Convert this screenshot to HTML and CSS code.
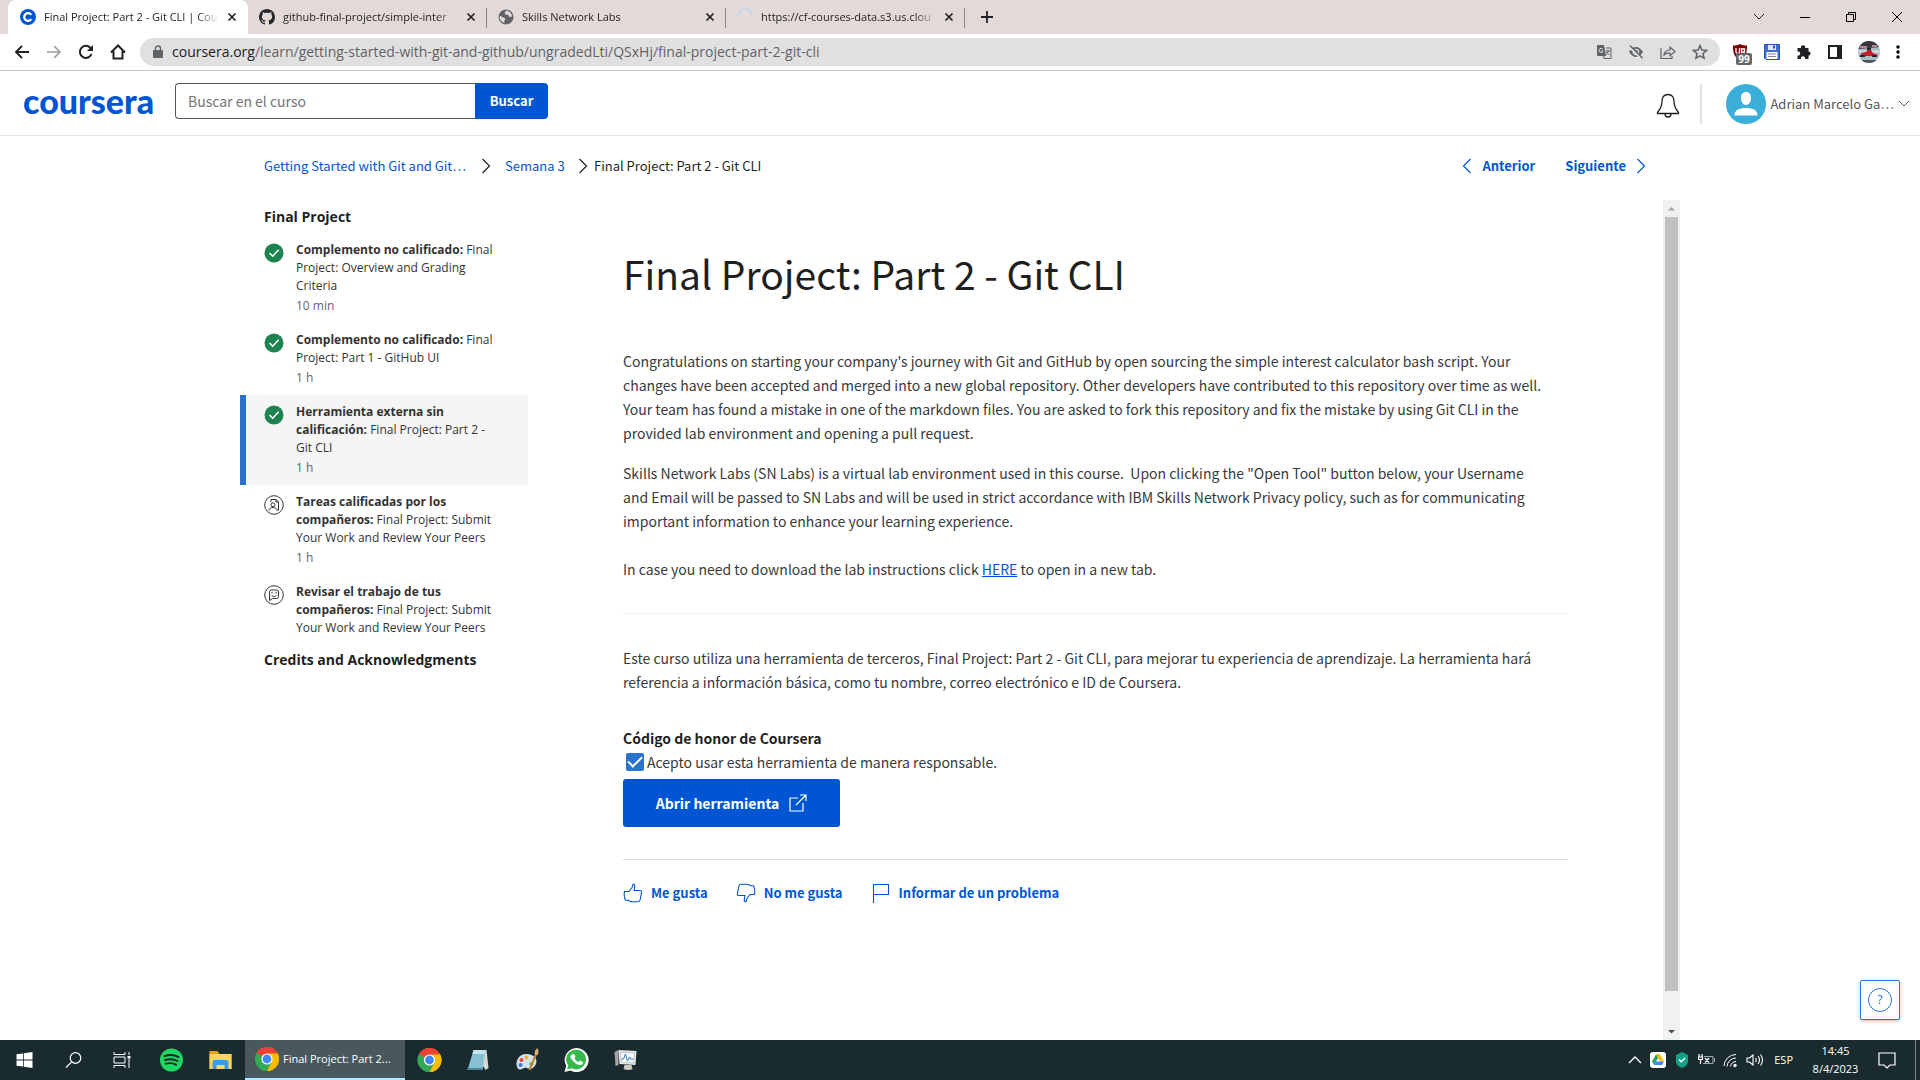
FILE: index.html
```html
<!DOCTYPE html>
<html lang="es">
<head>
<meta charset="utf-8">
<title>Final Project: Part 2 - Git CLI | Coursera</title>
<link rel="stylesheet" href="styles.css">
</head>
<body>
<svg class="defs" width="0" height="0" aria-hidden="true">
  <defs>
    <symbol id="close" viewBox="0 0 10 10"><path d="M1.5 1.5l7 7M8.5 1.5l-7 7" fill="none" stroke="#202124" stroke-width="1.7"/></symbol>
    <symbol id="right" viewBox="0 0 10 16"><path d="M1.500 1l7 7-7 7" fill="none" stroke="currentColor" stroke-width="1.200"/></symbol>
    <symbol id="left" viewBox="0 0 10 16"><path d="M8.500 1l-7 7 7 7" fill="none" stroke="currentColor" stroke-width="1.200"/></symbol>
    <symbol id="done" viewBox="0 0 20 20"><circle cx="10" cy="10" r="9.500" fill="#1d8450"/><path d="M5.500 10l3.200 3.200 6-6.400" fill="none" stroke="#fff" stroke-width="1.500"/></symbol>
    <symbol id="chrome" viewBox="0 0 24 24"><path d="M12 12L1.610 6A12 12 0 0 1 22.390 6z" fill="#ea4335"/><path d="M12 12L22.390 6A12 12 0 0 1 12 24z" fill="#fbbc04"/><path d="M12 12V24A12 12 0 0 1 1.610 6z" fill="#34a853"/><path d="M12 6.500h10.700A12 12 0 0 0 1.610 6l5.600 8.700z" fill="#ea4335"/><path d="M17 9.500L12 24a12 12 0 0 0 10.700-17.500H12z" fill="#fbbc04"/><path d="M7.200 9.300L1.610 6A12 12 0 0 0 12 24l4.800-9.300z" fill="#34a853"/><circle cx="12" cy="12" r="5.600" fill="#fff"/><circle cx="12" cy="12" r="4.400" fill="#4285f4"/></symbol>
  </defs>
</svg>

<header class="browser">
  <div class="tabs">
    <div class="tab active">
      <svg width="16" height="16" viewBox="0 0 16 16"><circle cx="8" cy="8" r="8" fill="#0056d2"/><path d="M11.200 5.900a3.800 3.800 0 1 0 0 4.200" fill="none" stroke="#fff" stroke-width="2.300"/></svg>
      <span class="tab-title">Final Project: Part 2 - Git CLI | Cou</span>
      <button class="icon-btn" aria-label="Cerrar"><svg width="10" height="10"><use href="#close"/></svg></button>
    </div>
    <div class="tab">
      <svg width="16" height="16" viewBox="0 0 16 16"><path fill="#24292f" d="M8 0C3.580 0 0 3.580 0 8c0 3.540 2.290 6.530 5.470 7.590.4.070.55-.17.55-.38 0-.19-.010-.82-.010-1.490-2.010.37-2.530-.49-2.690-.94-.090-.23-.48-.94-.82-1.130-.28-.15-.68-.52-.010-.53.63-.010 1.080.58 1.230.82.72 1.210 1.870.87 2.330.66.070-.52.28-.87.51-1.070-1.780-.2-3.640-.89-3.640-3.950 0-.87.31-1.590.82-2.150-.080-.2-.36-1.020.080-2.120 0 0 .67-.21 2.200.82.640-.18 1.320-.27 2-.27s1.360.090 2 .27c1.530-1.040 2.200-.82 2.200-.82.44 1.100.16 1.920.080 2.120.51.56.82 1.270.82 2.150 0 3.070-1.870 3.750-3.650 3.950.29.25.54.73.54 1.480 0 1.070-.010 1.930-.010 2.200 0 .21.15.46.55.38A8 8 0 0 0 16 8c0-4.420-3.580-8-8-8z"/></svg>
      <span class="tab-title">github-final-project/simple-inter</span>
      <button class="icon-btn" aria-label="Cerrar"><svg width="10" height="10"><use href="#close"/></svg></button>
    </div>
    <div class="tab">
      <svg width="16" height="16" viewBox="0 0 16 16"><circle cx="8" cy="8" r="7.500" fill="#5f6368"/><path d="M2 6.500l2.500 1.800 2 .4.800 1.800-1.200 1.800.4 2L3 12 1.500 9zM8.500 1.500L6.500 4l1 1.500 2.500.300 1.500 2.200 2.500-.5-.5-2.500-2.500-2.500z" fill="#e3dad7"/></svg>
      <span class="tab-title">Skills Network Labs</span>
      <button class="icon-btn" aria-label="Cerrar"><svg width="10" height="10"><use href="#close"/></svg></button>
    </div>
    <div class="tab">
      <svg width="16" height="16" viewBox="0 0 16 16"><path d="M1 6.500A7 7 0 0 1 15 8" fill="none" stroke="#bcd3f7" stroke-width="1.600"/></svg>
      <span class="tab-title">https://cf-courses-data.s3.us.clou</span>
      <button class="icon-btn" aria-label="Cerrar"><svg width="10" height="10"><use href="#close"/></svg></button>
    </div>
    <button class="icon-btn new-tab" aria-label="Nueva pestaña"><svg width="14" height="14" viewBox="0 0 14 14"><path d="M7 1v12M1 7h12" stroke="#202124" stroke-width="1.800"/></svg></button>
    <div class="window-controls">
      <button class="icon-btn" aria-label="Pestañas"><svg width="12" height="8" viewBox="0 0 12 8"><path d="M1 1l5 5 5-5" fill="none" stroke="#222"/></svg></button>
      <button class="icon-btn" aria-label="Minimizar"><svg width="10" height="10" viewBox="0 0 10 10"><path d="M0 5.500h10" stroke="#000"/></svg></button>
      <button class="icon-btn" aria-label="Restaurar"><svg width="10" height="10" viewBox="0 0 10 10"><path d="M.5 2.500h7v7h-7zM2.500 2.500v-2h7v7h-2" fill="none" stroke="#000"/></svg></button>
      <button class="icon-btn" aria-label="Cerrar ventana"><svg width="10" height="10" viewBox="0 0 10 10"><path d="M0 0l10 10M10 0L0 10" stroke="#000"/></svg></button>
    </div>
  </div>
  <div class="toolbar">
    <div class="nav">
      <button class="icon-btn" aria-label="Atrás"><svg width="16" height="16" viewBox="0 0 16 16"><path d="M15 8H2M8 2L2 8l6 6" fill="none" stroke="#202124" stroke-width="1.900"/></svg></button>
      <button class="icon-btn" aria-label="Adelante"><svg width="16" height="16" viewBox="0 0 16 16"><path d="M1 8h13M8 2l6 6-6 6" fill="none" stroke="#9a9da0" stroke-width="1.600"/></svg></button>
      <button class="icon-btn" aria-label="Recargar"><svg width="16" height="16" viewBox="0 0 16 16"><path d="M13.500 10A6 6 0 1 1 12.300 3.800L14 5.500" fill="none" stroke="#202124" stroke-width="2"/><path d="M15 1v6H9z" fill="#202124"/></svg></button>
      <button class="icon-btn" aria-label="Inicio"><svg width="16" height="16" viewBox="0 0 16 16"><path d="M1 8.500L8 1.500l7 7M3.500 7v7.500h9V7" fill="none" stroke="#202124" stroke-width="2"/></svg></button>
    </div>
    <div class="address">
      <svg width="10" height="14" viewBox="0 0 10 14"><rect y="5" width="10" height="8" rx="1" fill="#5f6368"/><path d="M2.500 6V3.500a2.500 2.500 0 0 1 5 0V6" fill="none" stroke="#5f6368" stroke-width="1.400"/></svg>
      <span class="url"><b>coursera.org</b>/learn/getting-started-with-git-and-github/ungradedLti/QSxHj/final-project-part-2-git-cli</span>
      <svg width="16" height="16" viewBox="0 0 16 16"><path d="M1 1h7l2 11H2a1 1 0 0 1-1-1z" fill="#5f6368"/><path d="M10 4h5v10.500H8L7.500 12" fill="none" stroke="#5f6368"/><path d="M6.500 5A2 2 0 1 0 7 7H5.200" fill="none" stroke="#e0e0e0"/><path d="M9.500 7h5M12 6v1c0 2-1 3-2 4M10.500 8c1 2 2 2 3 3" fill="none" stroke="#5f6368"/></svg>
      <svg width="16" height="16" viewBox="0 0 16 16"><path d="M1 8q7-10 14 0-7 10-14 0z" fill="#5f6368"/><circle cx="8" cy="8" r="2.600" fill="#5f6368" stroke="#e0e0e0" stroke-width="1.400"/><path d="M1.500 2.500l12 12" stroke="#e0e0e0" stroke-width="3"/><path d="M2 1.500l12.500 12.500" stroke="#5f6368" stroke-width="1.500"/></svg>
      <svg width="16" height="16" viewBox="0 0 16 16"><path d="M1 4v10.500h11V12M4 11c.5-4 3-5 6-5V3l5 4.500-5 4.300V9c-3-.2-4.500.5-6 2z" fill="none" stroke="#5f6368" stroke-width="1.200"/></svg>
      <svg width="16" height="16" viewBox="0 0 16 16"><path d="M8 1.600l1.900 4.500 4.700.4-3.600 3.100 1.100 4.700L8 11.800l-4.100 2.500L5 9.600 1.400 6.500l4.700-.4z" fill="none" stroke="#5f6368" stroke-width="1.500"/></svg>
    </div>
    <div class="extensions">
      <div class="blocker"><svg width="16" height="16" viewBox="0 0 16 16"><path d="M8 0c2 1.200 4.500 1.500 7 1.500 0 7-.5 11-7 14.500C1.500 12.500 1 8.500 1 1.500 3.500 1.500 6 1.200 8 0z" fill="#800000"/><path d="M4 4v4c0 2 3.500 2 3.500 0V4M9.500 9V4M9.500 5h3v3h-3" fill="none" stroke="#fff" stroke-width="1.300"/></svg><span class="badge">99</span></div>
      <svg width="16" height="16" viewBox="0 0 16 16"><path d="M.5.5h15v15H2L.5 14z" fill="#3b6fd1" stroke="#2a56b0"/><path d="M4 1h8v5H4z" fill="#dce9fb"/><path d="M9 1.500h2v3H9z" fill="#2a56b0"/><path d="M2.500 8h11v7h-11z" fill="#fff"/><path d="M4 10h8M4 12.500h8" stroke="#888"/></svg>
      <svg width="16" height="16" viewBox="0 0 16 16"><path d="M1.500 4H5a2.200 2.200 0 1 1 4.200 0h3.300v3.500a2.100 2.100 0 1 1 0 4.200V15H9a2.100 2.100 0 1 0-4 0H1.500v-3.500a2.100 2.100 0 1 0 0-4z" fill="#202124"/></svg>
      <svg width="14" height="14" viewBox="0 0 14 14"><path d="M1 1h12v12H1z" fill="none" stroke="#202124" stroke-width="2"/><path d="M9 1h4v12H9z" fill="#202124"/></svg>
      <svg width="22" height="22" viewBox="0 0 22 22"><clipPath id="face"><circle cx="11" cy="11" r="11"/></clipPath><g clip-path="url(#face)"><path fill="#a9bac3" d="M0 0h22v22H0z"/><path fill="#39363d" d="M0 0h22v6L0 8z"/><path fill="#b88594" d="M2 5h7v2H2zM14 4h5v2h-5z"/><path fill="#c7d4da" d="M0 9h22v3H0z"/><path fill="#c51e2b" d="M3 12l5-1 2-3 3 1 2 3 5 2-3 1H4z"/><path fill="#25242a" d="M2 14h5v2H2zM14 14h5v2h-5zM9 7h4v2H9z"/><path fill="#4a5862" d="M0 19h22v4H0z"/></g></svg>
      <svg width="4" height="16" viewBox="0 0 4 16"><circle cx="2" cy="3" r="1.700"/><circle cx="2" cy="8" r="1.700"/><circle cx="2" cy="13" r="1.700"/></svg>
    </div>
  </div>
</header>

<header class="site-header">
  <a class="logo" href="#">coursera</a>
  <form class="search">
    <input type="text" placeholder="Buscar en el curso" aria-label="Buscar en el curso">
    <button type="button">Buscar</button>
  </form>
  <div class="account">
    <button class="icon-btn bell" aria-label="Notificaciones"><svg width="24" height="26" viewBox="0 0 24 26"><path d="M12 1.500c-4 0-6 3-6 7 0 5-2 8-4.500 11v1h21v-1C20 16.500 18 13.500 18 8.500c0-4-2-7-6-7zM9 21c0 4 6 4 6 0" fill="none" stroke="#1f1f1f" stroke-width="1.300"/></svg></button>
    <button class="user">
      <svg width="40" height="40" viewBox="0 0 40 40"><circle cx="20" cy="20" r="20" fill="#3bafda"/><path d="M20 8c3.500 0 5 2.500 5 6s-2 7-5 7-5-3.500-5-7 1.500-6 5-6zM8.500 31.500C8.500 26 13 24 20 24s11.500 2 11.500 7.500z" fill="#fff"/></svg>
      <span>Adrian Marcelo Ga…</span>
      <svg class="caret" width="12" height="8" viewBox="0 0 12 8"><path d="M1 1l5 5 5-5" fill="none" stroke="#555"/></svg>
    </button>
  </div>
</header>

<div class="page">
  <div class="crumb-bar">
    <nav class="crumbs" aria-label="Ruta">
      <a class="course" href="#">Getting Started with Git and Git…</a>
      <svg class="sep" width="10" height="16"><use href="#right"/></svg>
      <a class="week" href="#">Semana 3</a>
      <svg class="sep" width="10" height="16"><use href="#right"/></svg>
      <span>Final Project: Part 2 - Git CLI</span>
    </nav>
    <nav class="pager" aria-label="Elementos">
      <a href="#"><svg width="10" height="16"><use href="#left"/></svg>Anterior</a>
      <a href="#">Siguiente<svg width="10" height="16"><use href="#right"/></svg></a>
    </nav>
  </div>
  <div class="columns">
    <aside class="sidebar">
      <h2>Final Project</h2>
      <ul>
        <li><svg width="20" height="20"><use href="#done"/></svg><div><a href="#"><b>Complemento no calificado:</b> Final Project: Overview and Grading Criteria</a><small>10 min</small></div></li>
        <li><svg width="20" height="20"><use href="#done"/></svg><div><a href="#"><b>Complemento no calificado:</b> Final Project: Part 1 - GitHub UI</a><small>1 h</small></div></li>
        <li class="current"><svg width="20" height="20"><use href="#done"/></svg><div><a href="#"><b>Herramienta externa sin calificación:</b> Final Project: Part 2 - Git CLI</a><small>1 h</small></div></li>
        <li><svg width="20" height="20" viewBox="0 0 20 20"><g fill="none" stroke="#333"><circle cx="10" cy="10" r="9.300"/><path d="M7 7V4.500h5l2.500 2.500v8H13M12 4.500V7h2.500M5 15.500c0-4 8-4 8 0"/><circle cx="9" cy="9.800" r="2"/></g></svg><div><a href="#"><b>Tareas calificadas por los compañeros:</b> Final Project: Submit Your Work and Review Your Peers</a><small>1 h</small></div></li>
        <li><svg width="20" height="20" viewBox="0 0 20 20"><g fill="none" stroke="#333"><circle cx="10" cy="10" r="9.300"/><path d="M5.500 15.500V7q0-2 2-2h5q2 0 2 2v4.500q0 2-2 2h-4zM7.500 10c1 2 4 2 5 0M8 7v1.500M12 7v1.500"/></g></svg><div><a href="#"><b>Revisar el trabajo de tus compañeros:</b> Final Project: Submit Your Work and Review Your Peers</a></div></li>
      </ul>
      <h2>Credits and Acknowledgments</h2>
    </aside>
    <main class="content">
      <h1>Final Project: Part 2 - Git CLI</h1>
      <p>Congratulations on starting your company's journey with Git and GitHub by open sourcing the simple interest calculator bash script. Your<br>changes have been accepted and merged into a new global repository. Other developers have contributed to this repository over time as well.<br>Your team has found a mistake in one of the markdown files. You are asked to fork this repository and fix the mistake by using Git CLI in the<br>provided lab environment and opening a pull request.</p>
      <p>Skills Network Labs (SN Labs) is a virtual lab environment used in this course.&nbsp; Upon clicking the "Open Tool" button below, your Username<br>and Email will be passed to SN Labs and will be used in strict accordance with IBM Skills Network Privacy policy, such as for communicating<br>important information to enhance your learning experience.</p>
      <p class="download">In case you need to download the lab instructions click <a href="#">HERE</a> to open in a new tab.</p>
      <hr class="light">
      <p class="notice">Este curso utiliza una herramienta de terceros, Final Project: Part 2 - Git CLI, para mejorar tu experiencia de aprendizaje. La herramienta hará<br>referencia a información básica, como tu nombre, correo electrónico e ID de Coursera.</p>
      <h3>Código de honor de Coursera</h3>
      <label class="agree"><input type="checkbox" checked>Acepto usar esta herramienta de manera responsable.</label>
      <button class="open-tool">Abrir herramienta<svg width="18" height="18" viewBox="0 0 18 18"><path d="M9 4H1v13h13V9M7 11L17 1M11 1h6v6" fill="none" stroke="#fff" stroke-width="1.200"/></svg></button>
      <hr>
      <div class="feedback">
        <button><svg width="20" height="20" viewBox="0 0 20 20"><path d="M1.500 8.500H6L9 4.500c.6-1 .4-3 1.200-3.300 1.500-.3 1.800 1.800 1.300 3.800L11 7.500h6.500c1.500 0 1.200 2 .9 3l-1.300 6.500c-.3 1.300-1 1.800-2.200 1.800H9c-2 0-2.500-1-4-1.500H2.500c-1.200-2.500-1.600-5.800-1-8.800z" fill="none" stroke="currentColor" stroke-width="1.100"/></svg>Me gusta</button>
        <button><svg width="20" height="20" viewBox="0 0 20 20"><path d="M18.500 11.500H14L11 15.500c-.6 1-.4 3-1.200 3.300-1.500.3-1.800-1.800-1.300-3.800l.5-2.500H2.500c-1.500 0-1.200-2-.9-3L2.900 3c.3-1.300 1-1.800 2.200-1.800H11c2 0 2.500 1 4 1.500h2.500c1.200 2.500 1.600 5.800 1 8.800z" fill="none" stroke="currentColor" stroke-width="1.100"/></svg>No me gusta</button>
        <button><svg width="20" height="20" viewBox="0 0 20 20"><path d="M2.500 20V1.500h15v10h-15" fill="none" stroke="currentColor" stroke-width="1.100"/></svg>Informar de un problema</button>
      </div>
    </main>
    <div class="scrollbar" aria-hidden="true">
      <svg width="17" height="17" viewBox="0 0 17 17"><path d="M5 10.500h7L8.500 7z" fill="#a3a3a3"/></svg>
      <div class="track"><div class="thumb"></div></div>
      <svg width="17" height="17" viewBox="0 0 17 17"><path d="M5 7h7l-3.500 3.500z" fill="#505050"/></svg>
    </div>
  </div>
</div>

<button class="help" aria-label="Ayuda"><span>?</span></button>

<footer class="taskbar">
  <div class="apps">
    <svg width="16" height="16" viewBox="0 0 16 16"><path d="M0 2.300l6.500-.9v6.200H0zM7.300 1.300L16 0v7.600H7.300zM0 8.400h6.500v6.200L0 13.700zM7.300 8.400H16V16l-8.700-1.200z" fill="#fff"/></svg>
    <svg width="16" height="16" viewBox="0 0 16 16"><circle cx="10" cy="6" r="5.300" fill="none" stroke="#fff" stroke-width="1.200"/><path d="M6.200 9.800L.5 15.500" stroke="#fff" stroke-width="1.200"/></svg>
    <svg width="18" height="16" viewBox="0 0 18 16"><path d="M.5 0v2.500h11V0M.5 16v-2.500h11V16M.5 5h11v6H.5zM15.500 0v3M15.500 7v9" fill="none" stroke="#fff"/><path d="M14 4h3v2.500h-3z" fill="#fff"/></svg>
    <svg width="24" height="24" viewBox="0 0 24 24"><circle cx="12" cy="12" r="11.500" fill="#1ed760"/><path d="M5 8q8-2.500 14 1M5.500 12q7-2 12.500 1M6 15.700q6-1.500 10.500 1" fill="none" stroke="#14252a" stroke-width="1.900" stroke-linecap="round"/></svg>
    <svg width="24" height="24" viewBox="0 0 24 24"><path d="M1 3h8l2 3h12v15H1z" fill="#e6a117"/><path d="M1 6h22v15H1z" fill="#ffd35c"/><path d="M4 21v-7q0-2 2-2h12q2 0 2 2v7h-4v-4H8v4z" fill="#3c9be8"/></svg>
  </div>
  <button class="running"><svg width="24" height="24"><use href="#chrome"/></svg>Final Project: Part 2...</button>
  <div class="apps pinned">
    <svg width="24" height="24"><use href="#chrome"/></svg>
    <svg width="24" height="24" viewBox="0 0 24 24"><path d="M7 2h13l2 18-3 2z" fill="#d8d9d2"/><path d="M7 2h12l-3 20H1z" fill="#86c1d3"/><path d="M7 2h12l-1 4H6z" fill="#c5e5ec"/><path d="M1 20h15v2H1z" fill="#4c8398"/></svg>
    <svg width="24" height="24" viewBox="0 0 24 24"><path d="M11 6C3 6-1 14 2 20c3 4 6-1 9 0s6 2 9-3-1-11-9-11z" fill="#d2e2ee"/><circle cx="6" cy="12" r="2" fill="#e5493a"/><circle cx="11" cy="9.500" r="1.900" fill="#f2b632"/><circle cx="5" cy="17" r="2" fill="#3b7dd0"/><circle cx="16" cy="16" r="2" fill="#4cae4f"/><path d="M21 5L14 22" stroke="#c8822e" stroke-width="2"/><path d="M19 6q0-4 3-6 2 4 0 7z" fill="#e0b16b"/></svg>
    <svg width="24" height="24" viewBox="0 0 24 24"><path d="M0 24l1.700-6A12 12 0 1 1 6 22.400z" fill="#fff"/><path d="M2.500 21.500l1.200-4A9.900 9.900 0 1 1 7 20.300z" fill="#34b94b"/><path d="M8 6l1.800.2L11 9l-1 1.500q1.200 2.500 4 3.500l1.500-1.500 3 1.400q.2 2.600-2.500 3.100-3.500.5-7.500-4T6.500 7.500z" fill="#fff"/></svg>
    <svg width="24" height="24" viewBox="0 0 24 24"><path d="M1 4l4-2v15l-3 1z" fill="#a5a5a3"/><path d="M5 2l18 1-1 14-16-1z" fill="#e6e6e3"/><path d="M7 4l14 1-1 10-12-1z" fill="#f7faff" stroke="#a8b2b8" stroke-width=".6"/><path d="M8 11h2l2-5 2 7 2-4 1 2h3" fill="none" stroke="#3279bd"/><path d="M11 17h7l1 4q-4 2-9 0z" fill="#c9cac6"/></svg>
  </div>
  <div class="tray">
    <svg width="14" height="16" viewBox="0 0 14 16"><path d="M1 11l6-6 6 6" fill="none" stroke="#fff" stroke-width="1.300"/></svg>
    <svg width="16" height="16" viewBox="0 0 16 16"><rect width="16" height="16" rx="3" fill="#fff"/><path d="M6 2.500h4L6 9.500l-2 3.500-2-3.500z" fill="#1fa463"/><path d="M6 2.500h4l4 7h-4z" fill="#fbbc04"/><path d="M4 13l2-3.500h8L12 13z" fill="#4285f4"/></svg>
    <svg width="16" height="16" viewBox="0 0 16 16"><path d="M8 0l6 3v6c0 4-3 6-6 7-3-1-6-3-6-7V3z" fill="#14a085"/><path d="M5 7.500l2.300 2.300L11 6" fill="none" stroke="#fff" stroke-width="1.500"/></svg>
    <svg width="17" height="16" viewBox="0 0 17 16"><path d="M6 4.500h9v7H5M15.500 6.500h1v3h-1" fill="none" stroke="#9caaad"/><path d="M1 2v3M4 2v3M.5 5h4v2.500h-4zM2.500 8v4M7 6l4 4.500M11 6l-4 4.500" fill="none" stroke="#fff" stroke-width="1.200"/></svg>
    <svg width="15" height="16" viewBox="0 0 15 16"><g fill="none" stroke="#fff"><path d="M1 14A12 12 0 0 1 13 2.500M4 14.500A9 9 0 0 1 13 6M7.500 14.500A6 6 0 0 1 13 9.500"/></g><circle cx="12" cy="13.500" r="1.700" fill="#fff"/></svg>
    <svg width="18" height="16" viewBox="0 0 18 16"><path d="M1 6h2.500L7 3v10l-3.500-3H1zM9.500 6q1.500 2 0 4M12 4q3 4 0 8M14.500 2.500q4 5.500 0 11" fill="none" stroke="#fff" stroke-width="1.100"/></svg>
    <span class="lang">ESP</span>
    <time>14:45<br>8/4/2023</time>
    <svg width="18" height="18" viewBox="0 0 18 18"><path d="M1 2h16v12h-5l-3 3-3-3H1z" fill="none" stroke="#fff" stroke-width="1.200"/></svg>
  </div>
</footer>
</body>
</html>
```

FILE: styles.css
```css
* { box-sizing: border-box; }
:root {
  --blue: #0056d2;
  --ui: "Open Sans", "Noto Sans", sans-serif;
  --text: "Noto Sans CJK SC", "Open Sans", sans-serif;
}
body {
  margin: 0;
  min-height: 100vh;
  display: flex;
  flex-direction: column;
  background: #fff;
  color: #1f1f1f;
  font: 14px/24px var(--text);
}
svg { display: block; flex: none; }
.defs { position: absolute; }
button { font: inherit; color: inherit; border: 0; background: none; padding: 0; cursor: pointer; }
a { color: var(--blue); text-decoration: none; }
h1, h2, h3, p, ul { margin: 0; padding: 0; }
ul { list-style: none; }
.icon-btn { display: flex; align-items: center; justify-content: center; flex: none; }

/* Browser frame */
.browser { font: 12px/16px var(--ui); border-bottom: 1px solid #c9c9c9; }
.tabs { display: flex; height: 34px; padding-left: 8px; background: #e3dad7; }
.tab {
  display: flex;
  align-items: center;
  gap: 8px;
  width: 239px;
  padding: 0 11px;
  position: relative;
}
.tab.active { width: 240px; padding-left: 12px; background: #fff; border-radius: 8px 8px 0 0; }
.tab:not(.active)::after { content: ""; position: absolute; right: 0; top: 8px; height: 20px; border-right: 1px solid #8c8886; }
.tab-title {
  flex: 1;
  overflow: hidden;
  white-space: nowrap;
  font-size: 11px;
  -webkit-mask-image: linear-gradient(to right, #000 88%, transparent);
  mask-image: linear-gradient(to right, #000 88%, transparent);
}
.new-tab { width: 44px; }
.window-controls { display: flex; align-items: center; margin-left: auto; }
.window-controls .icon-btn { width: 46px; height: 28px; }
.toolbar { display: flex; align-items: center; height: 36px; padding: 0 20px 0 14px; background: #fff; }
.nav { display: flex; gap: 16px; }
.address {
  flex: 1;
  display: flex;
  align-items: center;
  gap: 16px;
  height: 28px;
  margin: 0 12px 0 14px;
  padding: 0 12px 0 13px;
  border-radius: 14px;
  background: #e0e0e0;
}
.url { flex: 1; margin-left: -7px; font-size: 14px; color: #5f6368; white-space: nowrap; }
.url b { font-weight: 400; color: #202124; }
.extensions { display: flex; align-items: center; gap: 16px; }
.blocker { position: relative; }
.badge {
  position: absolute;
  left: 4px;
  top: 9px;
  width: 16px;
  border-radius: 2px;
  background: #666;
  color: #fff;
  font: bold 10px/12px var(--ui);
  text-align: center;
}

/* Course header */
.site-header { display: flex; align-items: center; height: 65px; padding: 0 10px 0 23px; border-bottom: 1px solid #e1e1e1; }
.logo { width: 152px; font: 900 34px/40px Lato, sans-serif; padding-bottom: 4px; }
.search { display: flex; height: 36px; margin-bottom: 4px; }
.search input {
  width: 300px;
  padding: 0 12px;
  border: 1px solid #555;
  border-right: 0;
  border-radius: 4px 0 0 4px;
  font: 14px/24px var(--text);
}
.search input::placeholder { color: #757575; opacity: 1; }
.search button { width: 73px; border-radius: 0 4px 4px 0; background: var(--blue); color: #fff; font-size: 13px; font-weight: 700; }
.account { display: flex; align-items: center; margin-left: auto; padding-top: 2px; }
.bell { padding: 4px 20px 0 0; }
.user { display: flex; align-items: center; gap: 4px; height: 40px; padding-left: 24px; border-left: 2px solid #e1e1e1; font-size: 13px; color: #555; }

/* Page */
.page { flex: 1; display: flex; flex-direction: column; width: 100%; max-width: 1440px; margin: 0 auto; }
.crumb-bar { display: flex; justify-content: space-between; align-items: center; height: 64px; padding: 0 34px 4px 24px; font-size: 13px; }
.crumbs, .pager, .pager a { display: flex; align-items: center; }
.course { width: 217px; }
.week { margin-left: 14px; width: 73px; }
.crumbs span { margin-left: 6px; }
.pager { gap: 30px; font-weight: 700; }
.pager a { gap: 10px; }
.columns { flex: 1; display: flex; }

.sidebar { flex: none; width: 288px; padding-top: 6px; font: 12px/18px var(--ui); color: #333; }
.sidebar h2 { margin-left: 24px; font: 700 14px/22px var(--ui); color: #1f1f1f; }
.sidebar ul { padding: 5px 0 4px; }
.sidebar li { display: flex; gap: 12px; padding: 8px 32px 8px 24px; }
.sidebar li svg { margin-top: 2px; }
.sidebar li.current { padding-left: 18px; border-left: 6px solid #2a73cc; background: #f5f5f5; }
.sidebar a { color: inherit; }
.sidebar b { font-weight: 700; }
.sidebar small { display: block; padding-top: 2px; font-size: 12px; color: #666; }

.content { flex: 1; padding: 48px 95px 0; color: #373a3c; }
.content p { white-space: nowrap; margin-bottom: 16px; }
.content h1 { margin-bottom: 50px; font: 400 39px/51px var(--text); color: #1f1f1f; }
.content .download { margin: 24px 0 32px; }
.content .download a { text-decoration: underline; }
.content hr { margin: 0; border: 0; border-top: 1px solid #dcdcdc; }
.content hr.light { border-color: #eee; }
.content .notice { margin: 32px 0; }
.content h3 { font: 700 14px/24px var(--text); color: #1f1f1f; }
.agree { display: flex; align-items: center; }
.agree input {
  appearance: none;
  width: 18px;
  height: 18px;
  margin: 0 3px;
  border-radius: 2px;
  background: #2a73cc;
  display: grid;
  place-items: center;
}
.agree input::after { content: ""; width: 12px; height: 6px; border: solid #fff; border-width: 0 0 2px 2px; transform: translateY(-2px) rotate(-45deg); }
.open-tool {
  display: flex;
  align-items: center;
  justify-content: center;
  gap: 10px;
  width: 217px;
  height: 48px;
  margin: 5px 0 32px;
  border-radius: 3px;
  background: var(--blue);
  color: #fff;
  font-weight: 700;
}
.feedback { display: flex; gap: 28px; padding-top: 21px; font-size: 13px; font-weight: 700; color: var(--blue); }
.feedback button { display: flex; align-items: center; gap: 8px; }

.scrollbar { display: flex; flex-direction: column; width: 17px; background: #f1f1f1; }
.track { flex: 1; padding: 0 2px; }
.thumb { height: 96%; background: #c1c1c1; }

.help {
  position: fixed;
  right: 20px;
  bottom: 60px;
  display: grid;
  place-items: center;
  width: 40px;
  height: 40px;
  border: 1px solid #2a73cc;
  border-radius: 2px;
  background: #fff;
  box-shadow: 0 1px 3px #bbb;
}
.help span { width: 24px; height: 24px; border: 1px solid #2a73cc; border-radius: 50%; color: #2a73cc; font: 12px/22px var(--ui); }

/* Taskbar */
.taskbar { display: flex; height: 40px; background: #1a2b30; color: #fff; font: 12px/18px var(--ui); }
.apps { display: flex; align-items: center; width: 245px; }
.apps svg { width: 49px; }
.running { display: flex; align-items: center; gap: 4px; width: 160px; padding-left: 10px; background: #48585c; border-bottom: 2px solid #a8ecff; font-size: 11px; white-space: nowrap; }
.tray { display: flex; align-items: center; gap: 8px; margin-left: auto; padding-right: 24px; position: relative; }
.tray::after { content: ""; position: absolute; right: 4px; top: 0; bottom: 0; border-right: 1px solid #7c888b; }
.lang { margin-left: 2px; font-size: 11px; }
time { width: 69px; text-align: center; font-size: 11px; }
```
